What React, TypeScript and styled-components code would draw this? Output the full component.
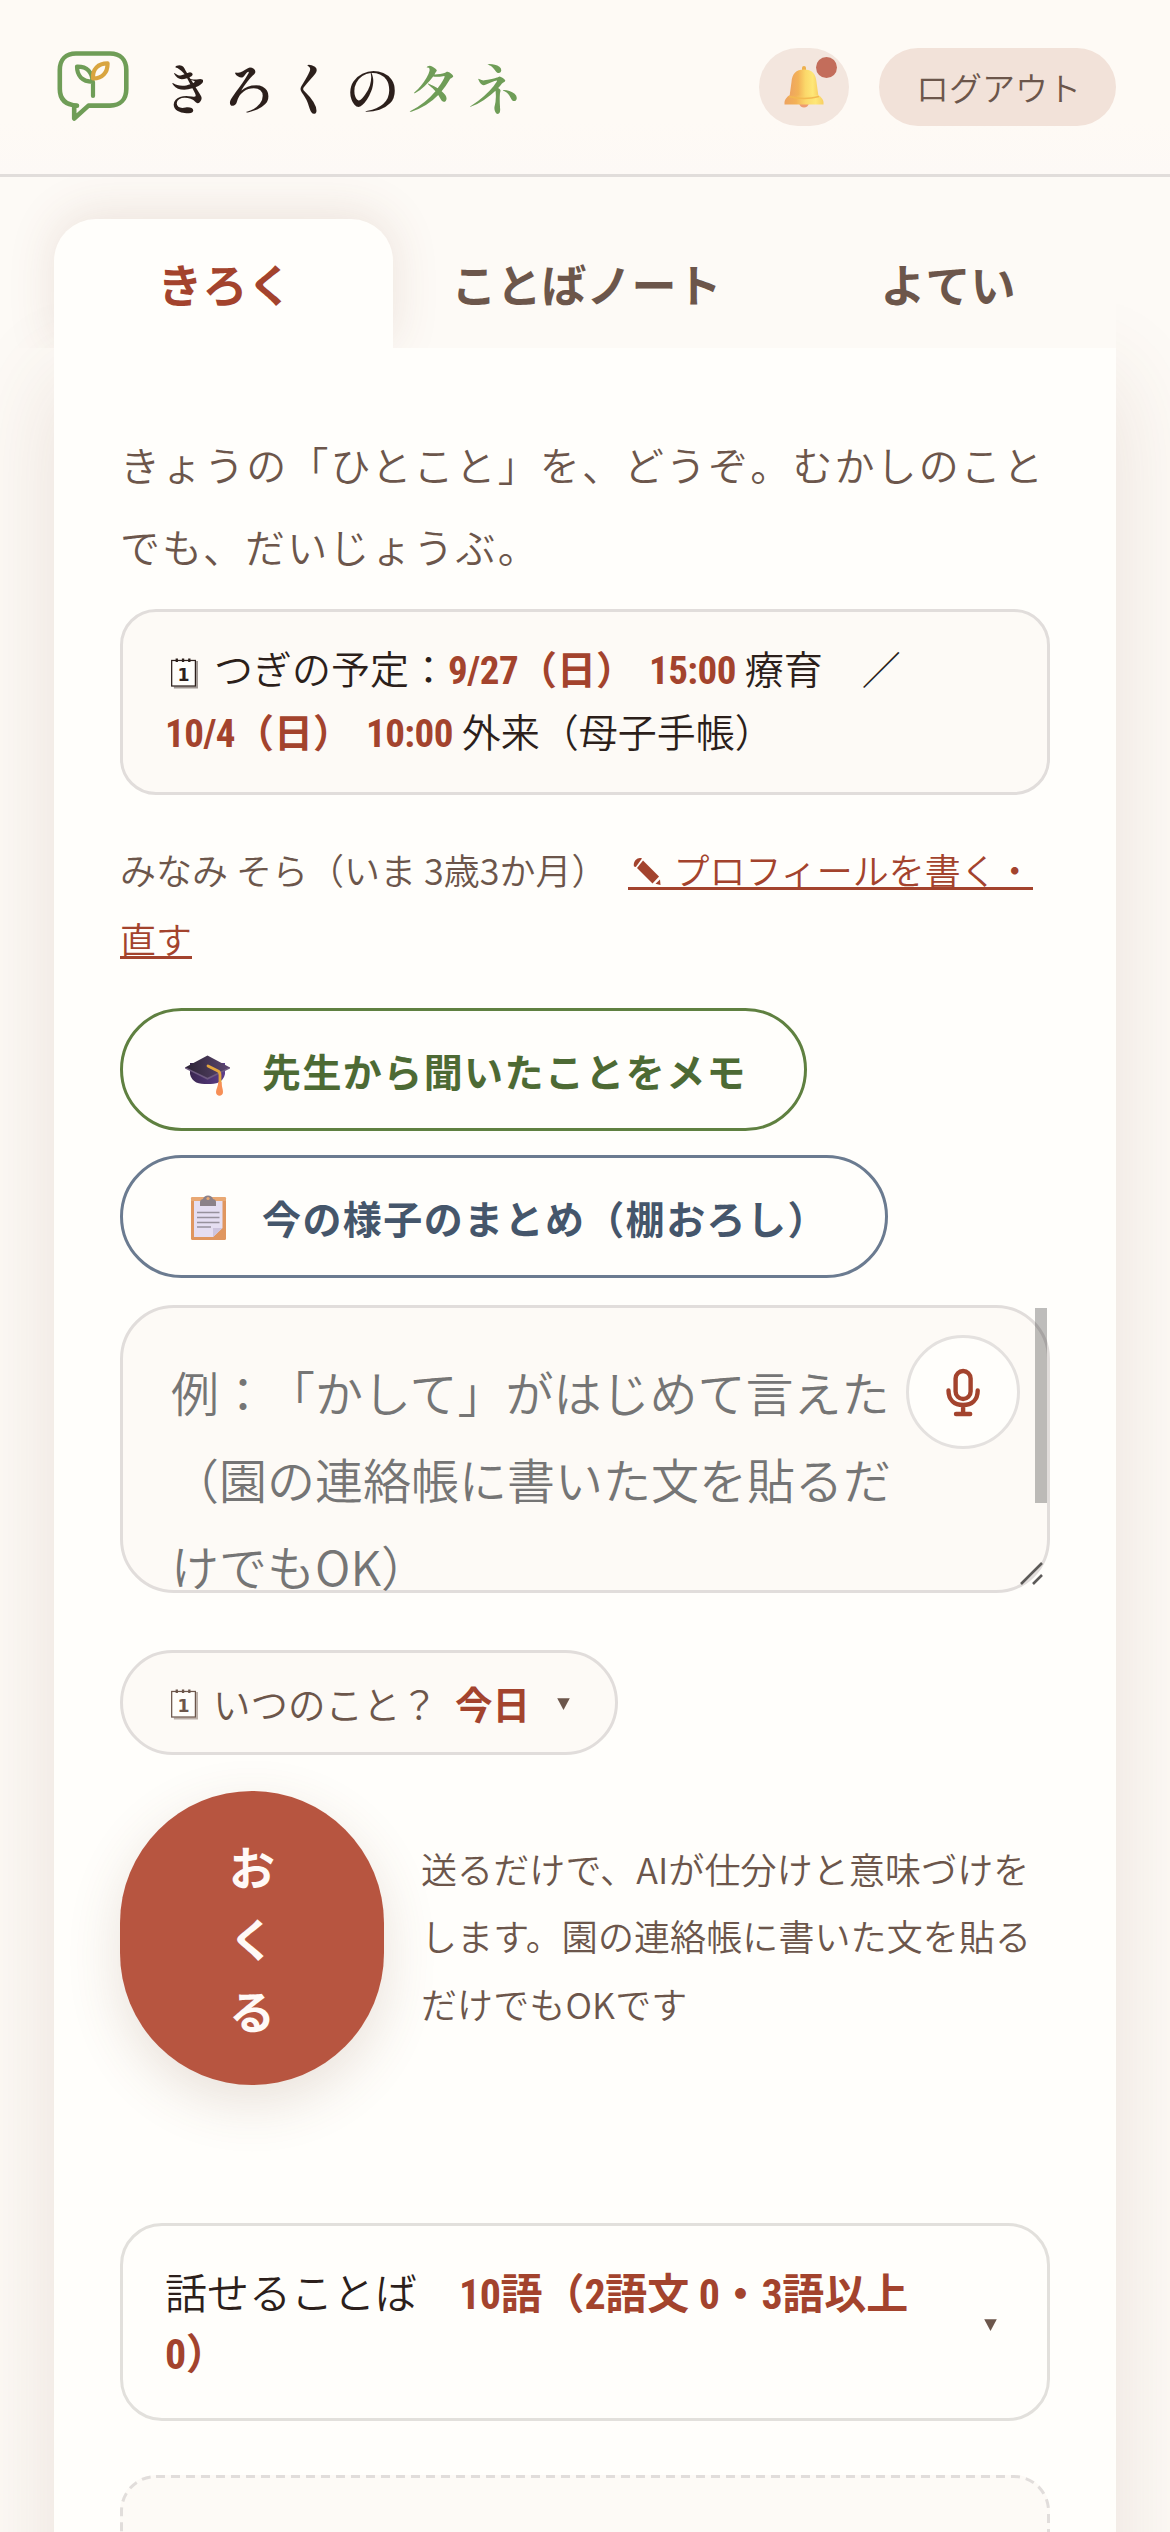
import React from "react";
import styled, { createGlobalStyle, css } from "styled-components";

const color = {
  page: "#fdfaf6",
  panel: "#fffefb",
  line: "#e1dddb",
  ink: "#2c1f1b",
  soft: "#6c564b",
  red: "#a3432d",
  send: "#b75540",
  leaf: "#6f9d57",
};

const GlobalStyle = createGlobalStyle`
  *, *::before, *::after { box-sizing: border-box; }
  body {
    margin: 0;
    background: ${color.page};
    color: ${color.ink};
    font-family: "Noto Sans CJK JP", sans-serif;
    font-weight: 350;
    text-spacing-trim: space-all;
  }
  button { font: inherit; color: inherit; margin: 0; padding: 0; border: 0; background: none; }
`;

const Screen = styled.div`
  width: 1170px;
  height: 2532px;
  overflow: hidden;
  background: ${color.page};
`;

const Header = styled.header`
  position: relative;
  z-index: 2;
  display: flex;
  align-items: flex-start;
  height: 177px;
  padding: 48px 54px 0;
  background: linear-gradient(#fefaf5 0 70%, #fdf9f6);
  border-bottom: 3px solid ${color.line};
`;

const Brand = styled.h1`
  display: flex;
  flex: 1;
  margin: 0;
  font-family: "Shippori Mincho", "Noto Serif CJK JP", "Noto Serif JP", "Noto Sans CJK JP", serif;
  font-size: 57px;
  font-weight: 600;
  line-height: 77px;
  letter-spacing: 4.7px;
  white-space: nowrap;

  svg { flex: none; margin-right: 21px; }
  em { font-style: normal; color: ${color.leaf}; }
`;

const BellButton = styled.button`
  position: relative;
  display: grid;
  place-items: center;
  width: 90px;
  height: 78px;
  margin-right: 30px;
  border-radius: 39px;
  background: #f3e6de;
`;

const BellDot = styled.span`
  position: absolute;
  top: 9px;
  right: 12px;
  width: 21px;
  height: 21px;
  border-radius: 50%;
  background: #c36d5b;
`;

const LogoutButton = styled.button`
  width: 237px;
  height: 78px;
  padding-left: 2px;
  border-radius: 39px;
  background: #f2e2d9;
  color: ${color.soft};
  font-size: 33px;
  line-height: 79px;
`;

const Main = styled.main`
  padding: 42px 54px 0;
`;

const Tabs = styled.nav`
  position: relative;
  z-index: 1;
  display: grid;
  grid-template-columns: 339px 1fr 339px;
  height: 129px;
  background: ${color.page};
`;

const Tab = styled.button<{ $active?: boolean }>`
  padding-left: 3px;
  border-radius: 42px 42px 0 0;
  font-size: 45px;
  font-weight: 700;
  line-height: 129px;
  color: ${color.soft};
  ${({ $active }) =>
    $active &&
    css`
      background: ${color.panel};
      color: ${color.red};
      box-shadow: 0 -6px 48px rgba(120, 72, 50, 0.13);
      clip-path: inset(-60px -60px 0 -60px);
    `}
`;

const Panel = styled.section`
  height: 2300px;
  padding: 76px 66px 0;
  background: ${color.panel};
  box-shadow: 0 30px 90px rgba(120, 72, 50, 0.14);
`;

const Intro = styled.p`
  margin: 0 0 22px;
  font-size: 40px;
  letter-spacing: 2.1px;
  line-height: 81.5px;
  color: ${color.soft};
  white-space: nowrap;
`;

const NextPlan = styled.div`
  height: 186px;
  padding: 24px 42px 0;
  border: 3px solid ${color.line};
  border-radius: 36px;
  background: ${color.page};
  font-size: 39px;
  line-height: 63px;
  white-space: nowrap;

  svg { margin: 0 16px 0 6px; vertical-align: -5px; }
`;

const Strong = styled.b`
  font-weight: 700;
  color: ${color.red};
  word-spacing: 5px;
`;

const Num = styled.span`
  font-family: Roboto, "Open Sans", sans-serif;
  font-stretch: 75%;
  letter-spacing: -0.5px;
  line-height: 0;
`;

const Profile = styled.p`
  margin: 40px 0 35px;
  font-size: 36px;
  line-height: 69px;
  color: ${color.soft};
  white-space: nowrap;
`;

const ChildName = styled.span`
  margin-right: 20px;
`;

const EditLink = styled.a`
  color: ${color.red};
  background: linear-gradient(${color.red}, ${color.red}) 0 calc(100% - 5px) / 100% 3px no-repeat;
  box-decoration-break: clone;
  -webkit-box-decoration-break: clone;

  svg { margin: 0 13px 0 5px; vertical-align: 0; }
`;

const Actions = styled.div`
  display: flex;
  flex-direction: column;
  align-items: flex-start;
  gap: 24px;
`;

const ActionButton = styled.button<{ $tone: string; $line: string }>`
  display: flex;
  align-items: center;
  height: 123px;
  padding: 0 57px;
  border: 3px solid ${({ $line }) => $line};
  border-radius: 62px;
  color: ${({ $tone }) => $tone};
  font-size: 39px;
  font-weight: 700;
  letter-spacing: 1.42px;
  white-space: nowrap;

  svg { flex: none; margin-right: 22px; }
`;

const ComposeWrap = styled.div`
  position: relative;
`;

const Compose = styled.div`
  height: 288px;
  margin: 27px 0 57px;
  padding: 40px 48px 0;
  border: 3px solid ${color.line};
  border-radius: 54px;
  background: ${color.page};
  color: #757575;
  font-size: 48px;
  line-height: 87px;
  white-space: nowrap;
`;

const MicButton = styled.button`
  position: absolute;
  top: 30px;
  right: 30px;
  display: grid;
  place-items: center;
  width: 114px;
  height: 114px;
  border: 3px solid #e4e1df;
  border-radius: 50%;
  background: ${color.panel};
`;

const ScrollThumb = styled.span`
  position: absolute;
  top: 3px;
  right: 3px;
  width: 12px;
  height: 195px;
  background: rgba(0, 0, 0, 0.255);
`;

const Grip = styled.svg`
  position: absolute;
  right: 6px;
  bottom: 7px;
`;

const WhenPill = styled.button`
  display: flex;
  align-items: center;
  width: 498px;
  height: 105px;
  padding-left: 48px;
  border: 3px solid ${color.line};
  border-radius: 53px;
  background: ${color.page};
  color: ${color.soft};
  font-size: 37.5px;
  line-height: 60px;
  white-space: nowrap;

  svg { flex: none; margin-top: 3px; }
  span { margin-left: 15px; }
  b { margin: 0 27px 0 17px; }
`;

const SendRow = styled.div`
  display: flex;
  align-items: center;
  gap: 37px;
  margin-top: 36px;
`;

const SendButton = styled.button`
  display: flex;
  flex-direction: column;
  align-items: center;
  justify-content: center;
  width: 264px;
  height: 294px;
  padding-bottom: 3px;
  border-radius: 132px;
  background: ${color.send};
  color: #fff9f6;
  font-size: 46px;
  font-weight: 700;
  line-height: 72px;
  box-shadow: 0 18px 54px rgba(120, 72, 50, 0.16);
`;

const Hint = styled.p`
  margin: 0 0 4px;
  color: ${color.soft};
  font-size: 36px;
  letter-spacing: 0.1px;
  line-height: 67.5px;
  white-space: nowrap;
`;

const Words = styled.div`
  display: flex;
  align-items: center;
  justify-content: space-between;
  height: 198px;
  margin-top: 138px;
  padding: 0 50px 0 42px;
  border: 3px solid #e2e0dc;
  border-radius: 42px;
  font-size: 42px;
  line-height: 60px;
  white-space: nowrap;

  p { margin: 0 0 3px; }
  b { word-spacing: 0; }
  > svg { margin-top: 5px; }
`;

const Slot = styled.div`
  position: relative;
  height: 200px;
  margin-top: 54px;
  border-radius: 36px;
  background: ${color.page};

  svg { position: absolute; inset: 0; }
`;

const Logo = () => (
  <svg width="84" height="78" viewBox="54 48 84 78" fill="none" strokeLinecap="round" strokeLinejoin="round" strokeWidth="4.6">
    <path
      stroke={color.leaf}
      d="M77 105.6C66 105 59.8 99.500 59.800 89V70C59.800 59.500 66 53.500 76 53.500H110C120 53.500 126.300 59.500 126.300 70V89C126.300 99.500 120 105.600 110 105.600H88.500L74.200 118.500V106"
    />
    <path stroke={color.leaf} strokeWidth="4.2" d="M93 96V82M92.500 81.800C82 81.500 77 75.500 77 66.600C87 66.300 92.500 72 92.500 81.800Z" />
    <path stroke="#d9a540" strokeWidth="4.2" d="M93 78.500C92.500 69 98 63.400 107.600 63.400C107.600 72.500 102.500 78.700 93 78.500Z" />
  </svg>
);

const Bell = () => (
  <svg width="40" height="44" viewBox="0 0 40 44">
    <defs>
      <linearGradient id="bell" x1="0" x2="1">
        <stop offset="0" stopColor="#eda35f" />
        <stop offset=".3" stopColor="#f3b257" />
        <stop offset=".55" stopColor="#fbd86a" />
        <stop offset=".8" stopColor="#fee777" />
        <stop offset="1" stopColor="#f8cf62" />
      </linearGradient>
    </defs>
    <path d="M15 38h10c-1 6-9 6-10 0Z" fill="#ee9b72" />
    <rect x="18" y="1" width="4" height="7" rx="2" fill="#eeb04e" />
    <path d="M7.500 17C8 9 12 4.500 20 4.500S32 9 32.500 17L34.500 31.500H5.500Z" fill="url(#bell)" />
    <path d="M5 30.500H35C37 32 39.500 35 39.500 37V39.500H.5V37C.5 35 3 32 5 30.500Z" fill="url(#bell)" />
    <path d="M5 31.500q15 4 30 0" stroke="#f3b950" strokeWidth="1.500" fill="none" />
  </svg>
);

const Calendar = ({ tone }: { tone: string }) => (
  <svg width="27" height="32" viewBox="0 0 28 33">
    <path d="M3 31.500H27V4" fill="none" stroke={tone} strokeOpacity=".45" strokeWidth="2" />
    <rect x=".7" y="3.500" width="24.600" height="26.500" fill="#fffefb" stroke={tone} strokeWidth="1.300" />
    <path d="M6 1.500v3.500M12.500 1.500v3.500M19 1.500v3.500" stroke={tone} strokeWidth="2.400" />
    <text x="13" y="24.500" textAnchor="middle" fontFamily="DejaVu Sans" fontWeight="700" fontSize="18" fill={tone}>
      1
    </text>
  </svg>
);

const Pencil = () => (
  <svg width="28" height="28" viewBox="0 0 28 28" fill={color.red}>
    <path d="M1 9.500C-.5 5 4.500-.5 9 1.500L2.800 10Z" />
    <path d="M4 11 10 3.500 26 19.500 19.500 26.500Z" />
    <path d="M27.500 28 27 22.500 22.500 26.800Z" />
  </svg>
);

const GradCap = () => (
  <svg width="60" height="54" viewBox="0 0 60 54">
    <defs>
      <linearGradient id="capTop" x1="0" x2="1">
        <stop offset="0" stopColor="#2b2333" />
        <stop offset="1" stopColor="#5d4771" />
      </linearGradient>
      <linearGradient id="capBase" x1="0" x2="1">
        <stop offset="0" stopColor="#3a2650" />
        <stop offset="1" stopColor="#5d3f8c" />
      </linearGradient>
    </defs>
    <path d="M10 20V31C12 40 19 41 27.500 41S43 40 45 31V20Z" fill="url(#capBase)" />
    <path d="M27.500 12.500 50 24.500 27.500 36 5 24.500Z" fill="url(#capTop)" />
    <path d="M27.500 34.800 5 24v1.500L27.500 36.800 50 25.500V24Z" fill="#6e5a80" />
    <path d="M28 23 38 28Q40 29 40 32V42" fill="none" stroke="#e3a53e" strokeWidth="2.800" strokeLinecap="round" />
    <path d="M38.300 39H41.500C41.500 43 43 46 43 49C43 54 36 54 36 49C36 46 38.300 43 38.300 39Z" fill="#f78f56" />
  </svg>
);

const Clipboard = () => (
  <svg width="60" height="54" viewBox="0 0 60 54">
    <rect x="11" y="7" width="35" height="43" rx="1.500" fill="#e0965f" />
    <path d="M11 8.500Q11 7 12.500 7H44.500Q46 7 46 8.500V11H11Z" fill="#e9a873" />
    <path d="M14 11H42.500V38L33 47H14Z" fill="#e5def2" />
    <path d="M33 47V38H42.500Z" fill="#cdc4de" />
    <path d="M20 16V12Q20 9.500 23 9Q24 5.500 28 5.500T33 9Q36 9.500 36 12V16Z" fill="#8b8189" />
    <circle cx="28" cy="8.500" r="1.600" fill="#e9a873" />
    <path d="M17 22.500H39.500M17 27.500H39.500M17 32.500H39.500M17 37H31" stroke="#97919d" strokeWidth="1.500" />
  </svg>
);

const Mic = () => (
  <svg width="36" height="50" viewBox="0 0 36 50" fill="none" stroke={color.red} strokeWidth="4.400" strokeLinecap="round">
    <rect x="10.600" y="4" width="15" height="28" rx="7.500" />
    <path d="M3.500 23.500C3.500 33 9.500 38 18.100 38S32.700 33 32.700 23.500M18.100 38V47M11 47H25.200" />
  </svg>
);

const Caret = () => (
  <svg width="13" height="12" viewBox="0 0 12 11">
    <path d="M.2.200h11.600L6 11Z" fill={color.soft} />
  </svg>
);

export default function App() {
  return (
    <>
      <GlobalStyle />
      <Screen>
        <Header>
          <Brand>
            <Logo />
            きろくの<em>タネ</em>
          </Brand>
          <BellButton aria-label="おしらせ">
            <Bell />
            <BellDot />
          </BellButton>
          <LogoutButton>ログアウト</LogoutButton>
        </Header>

        <Main>
          <Tabs>
            <Tab $active>きろく</Tab>
            <Tab>ことばノート</Tab>
            <Tab>よてい</Tab>
          </Tabs>

          <Panel>
            <Intro>
              きょうの「ひとこと」を、どうぞ。むかしのこと
              <br />
              でも、だいじょうぶ。
            </Intro>

            <NextPlan>
              <Calendar tone={color.ink} />
              つぎの予定：
              <Strong>
                <Num>9/27</Num>（日） <Num>15:00</Num>
              </Strong>{" "}
              療育　／
              <br />
              <Strong>
                <Num>10/4</Num>（日） <Num>10:00</Num>
              </Strong>{" "}
              外来（母子手帳）
            </NextPlan>

            <Profile>
              <ChildName>みなみ そら（いま 3歳3か月）</ChildName>
              <EditLink>
                <Pencil />
                プロフィールを書く・
                <br />
                直す
              </EditLink>
            </Profile>

            <Actions>
              <ActionButton $tone="#4d6a34" $line="#5f8040">
                <GradCap />
                先生から聞いたことをメモ
              </ActionButton>
              <ActionButton $tone="#45566b" $line="#6b7b90">
                <Clipboard />
                今の様子のまとめ（棚おろし）
              </ActionButton>
            </Actions>

            <ComposeWrap>
              <Compose>
                例：「かして」がはじめて言えた
                <br />
                （園の連絡帳に書いた文を貼るだ
                <br />
                けでもOK）
              </Compose>
              <MicButton aria-label="音声入力">
                <Mic />
              </MicButton>
              <ScrollThumb />
              <Grip width="24" height="24" viewBox="0 0 24 24" stroke="#5c5a58" strokeWidth="2.600">
                <path d="M1 22 22 1M13 22 22 13" />
              </Grip>
            </ComposeWrap>

            <WhenPill>
              <Calendar tone={color.soft} />
              <span>いつのこと？</span>
              <Strong>今日</Strong>
              <Caret />
            </WhenPill>

            <SendRow>
              <SendButton>
                <span>お</span>
                <span>く</span>
                <span>る</span>
              </SendButton>
              <Hint>
                送るだけで、AIが仕分けと意味づけを
                <br />
                します。園の連絡帳に書いた文を貼る
                <br />
                だけでもOKです
              </Hint>
            </SendRow>

            <Words>
              <p>
                話せることば{"　"}
                <Strong>
                  <Num>10</Num>語（<Num>2</Num>語文 <Num>0</Num>・<Num>3</Num>語以上
                  <br />
                  <Num>0</Num>）
                </Strong>
              </p>
              <Caret />
            </Words>

            <Slot>
              <svg width="930" height="200" fill="none" stroke={color.line} strokeWidth="3" strokeDasharray="9 6">
                <rect x="1.500" y="1.500" width="927" height="220" rx="34.500" />
              </svg>
            </Slot>
          </Panel>
        </Main>
      </Screen>
    </>
  );
}
